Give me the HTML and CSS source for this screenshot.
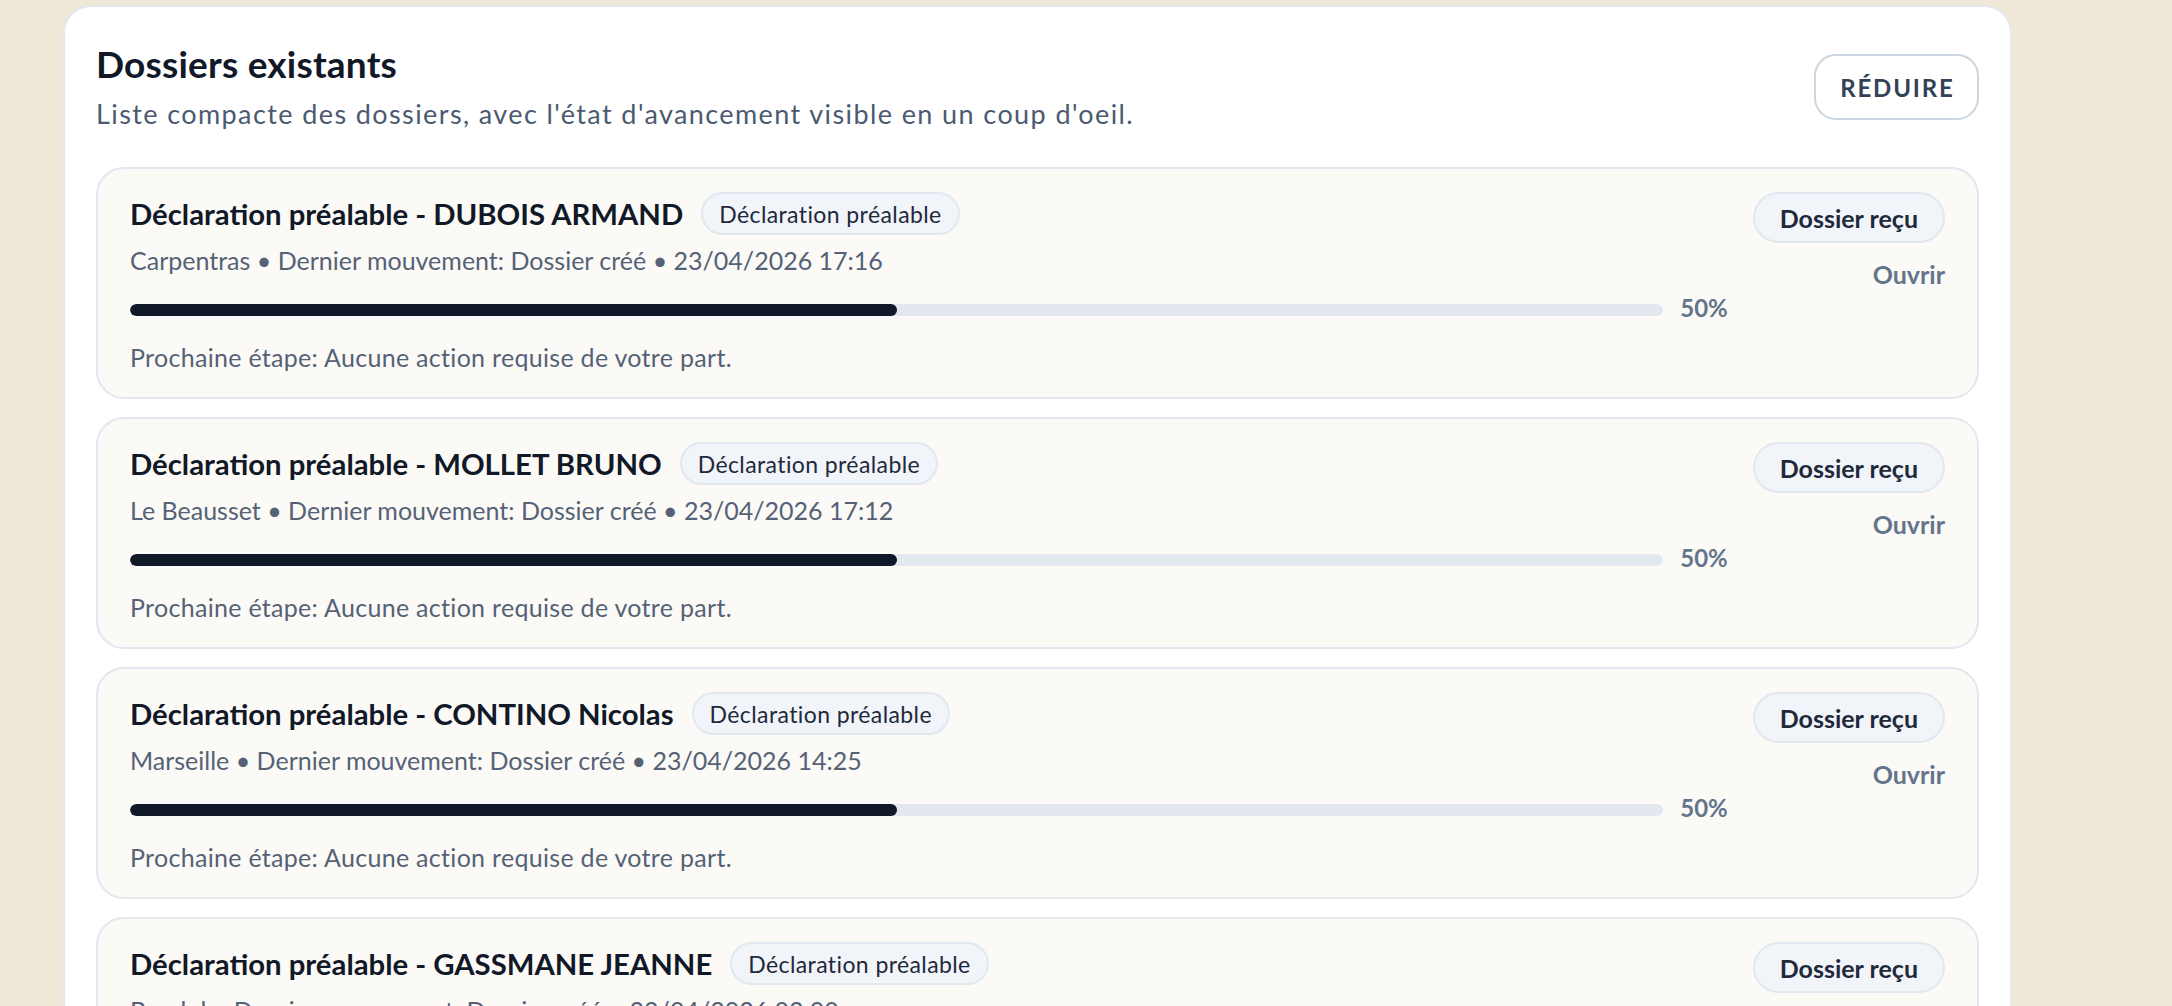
FILE: index.html
```html
<!DOCTYPE html>
<html lang="fr">
<head>
<meta charset="utf-8">
<title>Dossiers existants</title>
<link rel="stylesheet" href="styles.css">
</head>
<body>
<main class="panel">
  <header class="panel-head">
    <div class="head-text">
      <h1 class="title">Dossiers existants</h1>
      <p class="subtitle">Liste compacte des dossiers, avec l'état d'avancement visible en un coup d'oeil.</p>
    </div>
    <button class="btn-reduce">RÉDUIRE</button>
  </header>

  <section class="list">
    <article class="card">
      <div class="card-main">
        <div class="card-title-row">
          <h2 class="card-title">Déclaration préalable - DUBOIS ARMAND</h2>
          <span class="tag">Déclaration préalable</span>
        </div>
        <p class="meta">Carpentras • Dernier mouvement: Dossier créé • 23/04/2026 17:16</p>
        <div class="progress-row">
          <div class="track"><div class="fill" style="width:50%"></div></div>
          <span class="pct">50%</span>
        </div>
        <p class="next">Prochaine étape: Aucune action requise de votre part.</p>
      </div>
      <div class="card-side">
        <span class="status">Dossier reçu</span>
        <a class="open">Ouvrir</a>
      </div>
    </article>

    <article class="card">
      <div class="card-main">
        <div class="card-title-row">
          <h2 class="card-title">Déclaration préalable - MOLLET BRUNO</h2>
          <span class="tag">Déclaration préalable</span>
        </div>
        <p class="meta">Le Beausset • Dernier mouvement: Dossier créé • 23/04/2026 17:12</p>
        <div class="progress-row">
          <div class="track"><div class="fill" style="width:50%"></div></div>
          <span class="pct">50%</span>
        </div>
        <p class="next">Prochaine étape: Aucune action requise de votre part.</p>
      </div>
      <div class="card-side">
        <span class="status">Dossier reçu</span>
        <a class="open">Ouvrir</a>
      </div>
    </article>

    <article class="card">
      <div class="card-main">
        <div class="card-title-row">
          <h2 class="card-title">Déclaration préalable - CONTINO Nicolas</h2>
          <span class="tag">Déclaration préalable</span>
        </div>
        <p class="meta">Marseille • Dernier mouvement: Dossier créé • 23/04/2026 14:25</p>
        <div class="progress-row">
          <div class="track"><div class="fill" style="width:50%"></div></div>
          <span class="pct">50%</span>
        </div>
        <p class="next">Prochaine étape: Aucune action requise de votre part.</p>
      </div>
      <div class="card-side">
        <span class="status">Dossier reçu</span>
        <a class="open">Ouvrir</a>
      </div>
    </article>

    <article class="card">
      <div class="card-main">
        <div class="card-title-row">
          <h2 class="card-title">Déclaration préalable - GASSMANE JEANNE</h2>
          <span class="tag">Déclaration préalable</span>
        </div>
        <p class="meta">Bandol • Dernier mouvement: Dossier créé • 23/04/2026 02:00</p>
        <div class="progress-row">
          <div class="track"><div class="fill" style="width:50%"></div></div>
          <span class="pct">50%</span>
        </div>
        <p class="next">Prochaine étape: Aucune action requise de votre part.</p>
      </div>
      <div class="card-side">
        <span class="status">Dossier reçu</span>
        <a class="open">Ouvrir</a>
      </div>
    </article>
  </section>
</main>
</body>
</html>
```

FILE: styles.css
```css
* { box-sizing: border-box; }
html, body { height: 100%; }
body {
  margin: 0;
  padding: 5px 0 0 63px;
  background: #f0e8d7;
  font-family: Lato, "Noto Sans", sans-serif;
  overflow: hidden;
}
.panel {
  width: 1949px;
  background: #ffffff;
  border: 2px solid #e2e7f0;
  border-radius: 28px;
  padding: 35px 31px 40px;
}
.panel-head {
  display: flex;
  justify-content: space-between;
  align-items: center;
}
.title {
  margin: 0;
  font-size: 37px;
  line-height: 44px;
  font-weight: 700;
  letter-spacing: 0.2px;
  color: #111827;
}
.subtitle {
  margin: 10px 0 0;
  font-size: 27px;
  line-height: 36px;
  letter-spacing: 1.4px;
  color: #4b5a70;
}
.btn-reduce {
  width: 165px;
  height: 66px;
  border: 2px solid #cbd5e1;
  border-radius: 22px;
  background: #fff;
  font-family: inherit;
  font-size: 24px;
  font-weight: 700;
  letter-spacing: 1.8px;
  text-indent: 1.8px;
  color: #334155;
  padding: 0;
}
.list {
  margin-top: 35px;
  display: flex;
  flex-direction: column;
  gap: 18px;
}
.card {
  display: flex;
  gap: 25px;
  background: #fbfaf6;
  border: 2px solid #e2e7f0;
  border-radius: 28px;
  padding: 23px 32px 25px;
  min-height: 232px;
}
.card-main { flex: 1; min-width: 0; }
.card-title-row {
  display: flex;
  align-items: center;
  gap: 18px;
  height: 43px;
}
.card-title {
  margin: 0;
  font-size: 29.3px;
  line-height: 38px;
  font-weight: 700;
  color: #111827;
  white-space: nowrap;
}
.tag {
  display: inline-flex;
  align-items: center;
  height: 43px;
  padding: 0 16px;
  border: 2px solid #e2e8f0;
  border-radius: 22px;
  background: #f1f4f9;
  font-size: 23px;
  letter-spacing: 0.4px;
  color: #1e293b;
  white-space: nowrap;
}
.meta {
  margin: 9px 0 0;
  font-size: 25px;
  line-height: 32px;
  color: #556276;
}
.progress-row {
  display: flex;
  align-items: center;
  gap: 17px;
  height: 28px;
  margin-top: 20px;
}
.track {
  flex: 1;
  height: 12px;
  border-radius: 6px;
  background: #e2e7f0;
  overflow: hidden;
}
.fill {
  height: 100%;
  border-radius: 6px;
  background: #111827;
}
.pct {
  font-size: 24px;
  line-height: 28px;
  font-weight: 700;
  color: #64748b;
  position: relative;
  top: -2px;
}
.next {
  margin: 18px 0 0;
  font-size: 25px;
  line-height: 30px;
  letter-spacing: 0.3px;
  color: #556276;
}
.card-side {
  display: flex;
  flex-direction: column;
  align-items: flex-end;
  gap: 17px;
}
.status {
  display: inline-flex;
  align-items: center;
  height: 51px;
  padding: 0 25px;
  border: 2px solid #e2e8f0;
  border-radius: 26px;
  background: #f1f4f9;
  font-size: 25px;
  font-weight: 700;
  color: #1e293b;
  white-space: nowrap;
}
.open {
  font-size: 25px;
  line-height: 28px;
  font-weight: 700;
  color: #64748b;
  cursor: pointer;
}
```
